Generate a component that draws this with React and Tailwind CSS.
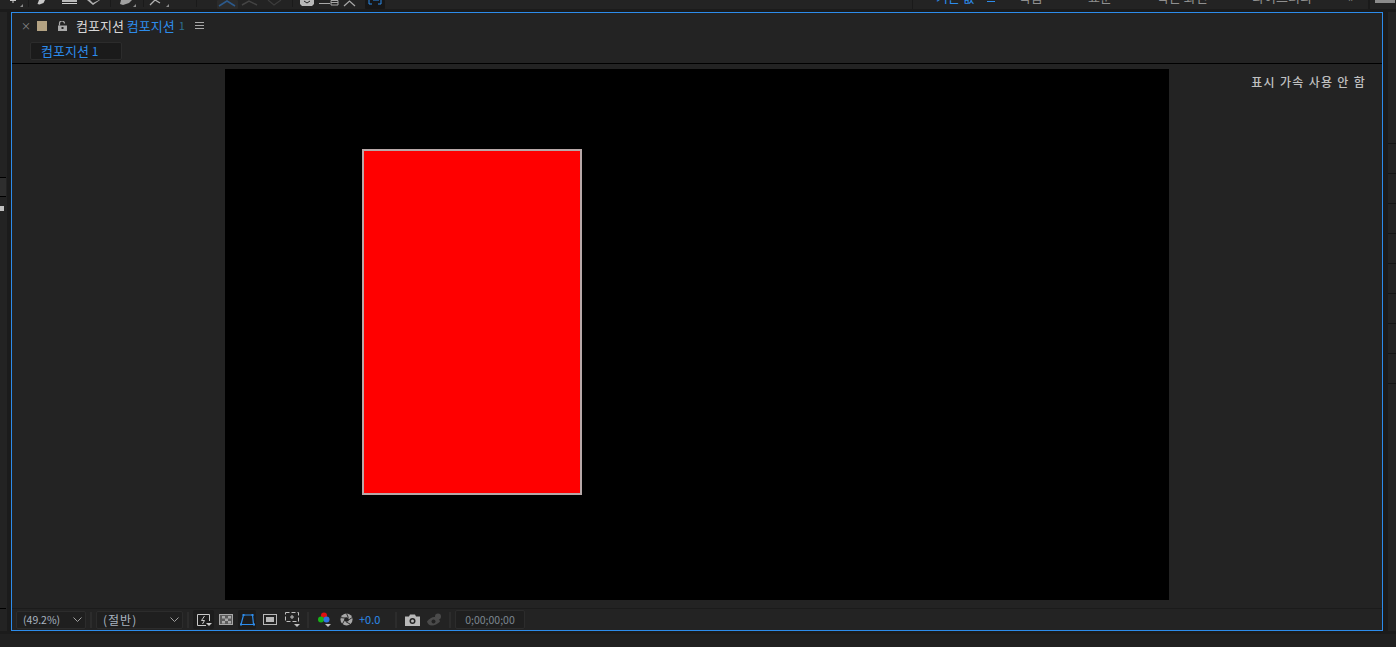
import React from "react";

const font = "font-['Noto_Sans_CJK_KR','Noto_Sans',sans-serif]";

function Chevron() {
  return (
    <svg width="9" height="5" viewBox="0 0 9 5" fill="none" stroke="#a0a0a0" strokeWidth="1">
      <path d="M0.5 0.5 L4.5 4.5 L8.5 0.5" />
    </svg>
  );
}

function Sep({ className = "" }) {
  return <div className={`w-[2px] h-[16px] shrink-0 bg-[#2c2c2c] ${className}`} />;
}

function Icon({ children, active, className = "w-[18px]" }) {
  return (
    <div className={`h-[19px] shrink-0 flex items-center justify-center rounded-[2px] ${active ? "bg-[#1c1c1c]" : ""} ${className}`}>
      {children}
    </div>
  );
}

function TopBar() {
  return (
    <div className="h-[12px] shrink-0 bg-[#1b1b1b]">
      <div className={`h-[9px] overflow-hidden flex items-start bg-[#232323] text-[13px] leading-[16px] text-[#8f8f8f] ${font}`}>
        <svg className="shrink-0" width="400" height="9" viewBox="0 0 400 9">
          <path d="M10 0h6v1h-2.500v2h-1V1H10z" fill="#c8c8c8" />
          <path d="M23 4v3h-3z" fill="#8a8a8a" />
          <rect x="28" y="0" width="1" height="7" fill="#1a1a1a" />
          <path d="M39 0h6l-1.500 3-4 1.500-2-.5z" fill="#c8c8c8" />
          <rect x="62" y="0" width="15" height="2" fill="#b8b8b8" />
          <rect x="62" y="3" width="15" height="1" fill="#d0d0d0" />
          <path d="M87 0l6 5 7-5-1 0-6 3-3-3z" fill="#b0b0b0" />
          <rect x="110" y="0" width="1" height="7" fill="#1a1a1a" />
          <path d="M121 0h11l-3 3-6 2-3-1z" fill="#a0a0a0" />
          <path d="M136 4v3h-3z" fill="#8a8a8a" />
          <rect x="143" y="0" width="1" height="7" fill="#1a1a1a" />
          <path d="M150 5l5-5M155 0l5 3" stroke="#b0b0b0" fill="none" strokeWidth="1.300" />
          <path d="M169 4v3h-3z" fill="#8a8a8a" />
          <rect x="196" y="0" width="1" height="7" fill="#1a1a1a" />
          <rect x="217" y="0" width="21" height="9" rx="1" fill="#2b2b2b" />
          <path d="M219 6l8-5 8 5" stroke="#2c5a8c" fill="none" strokeWidth="1.500" />
          <path d="M242 5l7-4 8 4" stroke="#444" fill="none" strokeWidth="1.500" />
          <path d="M268 0l6 5 7-5" stroke="#3c3c3c" fill="none" strokeWidth="1.200" />
          <rect x="292" y="0" width="1" height="7" fill="#1a1a1a" />
          <path d="M300 0h14v4l-2 2h-10l-2-2z" fill="#b8b8b8" />
          <path d="M304 1l3 2 3-2" stroke="#232323" fill="none" />
          <rect x="319" y="3" width="11" height="1" fill="#a8a8a8" />
          <path d="M331 .5h7V5h-7zM331 2.500h7" stroke="#a8a8a8" fill="none" />
          <path d="M344 6l5.500-5 5.500 5" stroke="#a8a8a8" fill="none" strokeWidth="1.200" />
          <rect x="365" y="0" width="20" height="9" rx="1" fill="#171717" />
          <path d="M369 0v4h3M381 0v4h-3M373 0h6" stroke="#2d8ceb" fill="none" />
        </svg>
        <div className="ml-[512px] w-[1px] h-[9px] shrink-0 bg-[#1a1a1a]" />
        <div className="ml-[23px] flex items-start shrink-0 -mt-[11px]">
          <span className="text-[#2d8ceb] w-[51px]">기본 값</span>
          <span className="w-[32px] pt-[12px]"><div className="h-[1px] w-[8px] bg-[#2d8ceb]" /></span>
          <span className="w-[69px]">학습</span>
          <span className="w-[69px]">표준</span>
          <span className="w-[95px]">작은 화면</span>
          <span className="w-[96px]">라이브러리</span>
          <span className="w-[20px]">»</span>
        </div>
        <div className="w-[2px] h-[9px] shrink-0 bg-[#1a1a1a]" />
        <div className="ml-[5px] w-[20px] h-[3px] shrink-0 bg-[#8c8c8c]" />
      </div>
    </div>
  );
}

function ViewerToolbar() {
  return (
    <div className={`h-[21px] shrink-0 flex items-center pl-[4px] text-[10px] ${font}`}>
      <div className="w-[70px] h-[18px] shrink-0 border border-[#2c2c2c] rounded-[2px] bg-[#1f1f1f] flex items-center justify-between pl-[6px] pr-[3px] text-[#a9b4c0]">
        <span className="text-[10.5px]">(49.2%)</span>
        <Chevron />
      </div>
      <Sep className="ml-[4px]" />
      <div className="ml-[4px] w-[87px] h-[18px] shrink-0 border border-[#2c2c2c] rounded-[2px] bg-[#1f1f1f] flex items-center justify-between pl-[6px] pr-[3px] text-[12px] tracking-[1px] text-[#a9b4c0]">
        <span>(절반)</span>
        <Chevron />
      </div>
      <Sep className="ml-[4px]" />
      <Icon active className="ml-[4px] w-[21px]">
        <svg width="16" height="14" viewBox="0 0 16 14" fill="none" stroke="#c8c8c8">
          <path d="M10 12.500H1.500V1.500h12V8" />
          <path d="M8.500 3L5.500 7.500h3L6.500 11" />
          <path d="M10 10h6l-3 3z" fill="#c8c8c8" stroke="none" />
        </svg>
      </Icon>
      <Icon className="ml-[3px] w-[18px]">
        <svg width="14" height="11" viewBox="0 0 14 11">
          <rect x="0.500" y="0.500" width="13" height="10" fill="#5c5c5c" stroke="#a8a8a8" />
          <path d="M3 2h3v2.500H3zM9 2h3v2.500H9zM6 4.500h3V7H6zM3 7h3v2.500H3zM9 7h3v2.500H9z" fill="#a8a8a8" />
        </svg>
      </Icon>
      <Icon active className="ml-[3px] w-[18px]">
        <svg width="15" height="13" viewBox="0 0 15 13" fill="none" stroke="#2d8ceb" strokeWidth="1.200">
          <path d="M3.500 2h9l1 9.500H1z" />
          <rect x="2.500" y="1" width="2" height="2" fill="#2d8ceb" stroke="none" />
          <rect x="11.500" y="1" width="2" height="2" fill="#2d8ceb" stroke="none" />
          <rect x="0" y="10.500" width="2" height="2" fill="#2d8ceb" stroke="none" />
          <rect x="13" y="10.500" width="2" height="2" fill="#2d8ceb" stroke="none" />
        </svg>
      </Icon>
      <Icon className="ml-[5px] w-[18px]">
        <svg width="14" height="11" viewBox="0 0 14 11" fill="none">
          <rect x="0.500" y="0.500" width="13" height="10" stroke="#b8b8b8" />
          <rect x="3" y="3" width="8" height="5" fill="#b8b8b8" />
        </svg>
      </Icon>
      <Icon className="ml-[4px] w-[18px]">
        <svg width="15" height="15" viewBox="0 0 15 15" fill="none" stroke="#c0c0c0">
          <rect x="0.500" y="0.500" width="13" height="9" strokeDasharray="4 2" />
          <path d="M7 3v4M5 5h4" />
          <path d="M9 12h6l-3 3z" fill="#c0c0c0" stroke="none" />
        </svg>
      </Icon>
      <Sep className="ml-[6px]" />
      <Icon className="ml-[7px] w-[17px]">
        <svg width="14" height="15" viewBox="0 0 14 15">
          <circle cx="6" cy="3.500" r="3" fill="#e01010" />
          <circle cx="3" cy="7.500" r="3" fill="#17b317" />
          <circle cx="8.500" cy="7.500" r="3" fill="#2f74e0" />
          <path d="M7 12h6l-3 3z" fill="#c0c0c0" />
        </svg>
      </Icon>
      <Icon className="ml-[6px] w-[15px]">
        <svg width="13" height="13" viewBox="0 0 14 14" fill="#a8a8a8">
          <circle cx="7" cy="7" r="6.500" />
          <circle cx="7" cy="7" r="2.500" fill="#232323" />
          <path d="M7 0.500L9 5M13 5L8.500 8M11 12L6.500 9.500M2.500 12L5 7.500M1 5l5 0.500" stroke="#232323" strokeWidth="1" fill="none" />
        </svg>
      </Icon>
      <span className="text-[#2d8ceb] ml-[5px] w-[28px] shrink-0 text-[11px]">+0.0</span>
      <Sep className="ml-[8px]" />
      <Icon className="ml-[5px] w-[20px]">
        <svg width="15" height="12" viewBox="0 0 15 12">
          <path d="M0 2.500h4L5 0.500h5l1 2h4V12H0z" fill="#b8b8b8" />
          <circle cx="7.500" cy="7" r="3" fill="#232323" />
          <circle cx="7.500" cy="7" r="1.500" fill="#b8b8b8" />
        </svg>
      </Icon>
      <Icon className="ml-[4px] w-[16px]">
        <svg width="15" height="13" viewBox="0 0 15 13">
          <path d="M0 8.500Q4 3.500 8 4T13 8.500Q9 12.500 5 12.500T0 8.500z" fill="#4a4a4a" />
          <circle cx="6.500" cy="8.500" r="2" fill="#232323" />
          <circle cx="11" cy="3.500" r="3" fill="#4a4a4a" />
        </svg>
      </Icon>
      <Sep className="ml-[7px]" />
      <div className="w-[70px] h-[19px] ml-[4px] shrink-0 border border-[#2c2c2c] rounded-[2px] bg-[#1f1f1f] flex items-center justify-center text-[10.5px] text-[#7d8790]">
        0;00;00;00
      </div>
    </div>
  );
}

export default function App() {
  return (
    <div className={`w-[1396px] h-[647px] overflow-hidden flex flex-col bg-[#1b1b1b] ${font}`}>
      <TopBar />
      <div className="flex items-stretch h-[619px] shrink-0">
        <div className="w-[7px] shrink-0 bg-[#232323] flex flex-col pt-[165px]">
          <div className="h-[20px] w-[6px] border-y border-black bg-[#2e2e2e]" />
          <div className="w-[4px] h-[5px] mt-[9px] bg-[#c0c0c0]" />
          <div className="w-[6px] h-[1px] mt-[397px] bg-black" />
        </div>
        <div className="w-[4px] shrink-0 bg-[#1b1b1b]" />
        <div className="w-[1372px] shrink-0 border border-[#2d8ceb] bg-[#232323] flex flex-col">
          <div className="h-[29px] shrink-0 flex items-center pb-[4px] text-[13px] pl-[9px]">
            <span className="text-[#8a8a8a] text-[10px] w-[16px] shrink-0">×</span>
            <div className="w-[10px] h-[10px] shrink-0 bg-[#b4a383]" />
            <svg className="ml-[11px] shrink-0" width="9" height="10" viewBox="0 0 9 10">
              <path d="M1.500 4.500V2.500a2.500 2.500 0 0 1 5 0" fill="none" stroke="#aaa" strokeWidth="1.200" />
              <rect x="0" y="4.500" width="9" height="5.500" fill="#aaa" />
              <rect x="3.500" y="6" width="2" height="2" fill="#232323" />
            </svg>
            <span className="ml-[9px] text-[#d8d8d8]">컴포지션</span>
            <span className="ml-[3px] text-[#2d8ceb]">컴포지션</span>
            <span className="ml-[4px] text-[#2d6f8f] text-[11px]">1</span>
            <svg className="ml-[10px] shrink-0" width="9" height="7" viewBox="0 0 9 7" fill="#a8a8a8">
              <rect width="9" height="1" />
              <rect y="3" width="9" height="1" />
              <rect y="6" width="9" height="1" />
            </svg>
          </div>
          <div className="h-[21px] shrink-0 pl-[18px]">
            <div className="w-[92px] h-[18px] border border-[#2c2c2c] rounded-[2px] bg-[#1b1b1b] flex items-center pl-[10px] text-[13px] text-[#2d8ceb]">
              컴포지션 <span className="ml-[3px] text-[12px]">1</span>
            </div>
          </div>
          <div className="h-[1px] shrink-0 bg-black" />
          <div className="relative flex-1 flex justify-center items-start pt-[5px]">
            <div className="w-[944px] h-[531px] bg-black pl-[137px] pt-[80px]">
              <div className="w-[220px] h-[346px] bg-[#ff0000] border-2 border-[#b8a8a8]" />
            </div>
            <span className="absolute right-[16px] top-[9px] text-[12px] font-medium tracking-[1.3px] text-[#c0c0c0]">표시 가속 사용 안 함</span>
          </div>
          <div className="h-[1px] shrink-0 bg-[#1b1b1b]" />
          <ViewerToolbar />
        </div>
        <div className="flex-1 bg-[#1b1b1b] flex">
          <div className="w-[5px] shrink-0" />
          <div className="flex-1 bg-[#232323] flex flex-col pt-[131px] gap-[29px]">
            {[0, 1, 2, 3, 4, 5, 6, 7, 8].map((i) => (
              <div key={i} className="h-[1px] bg-[#141414]" />
            ))}
          </div>
        </div>
      </div>
      <div className="h-[3px] shrink-0 bg-[#1b1b1b]" />
      <div className="flex-1 bg-[#202020]" />
    </div>
  );
}
